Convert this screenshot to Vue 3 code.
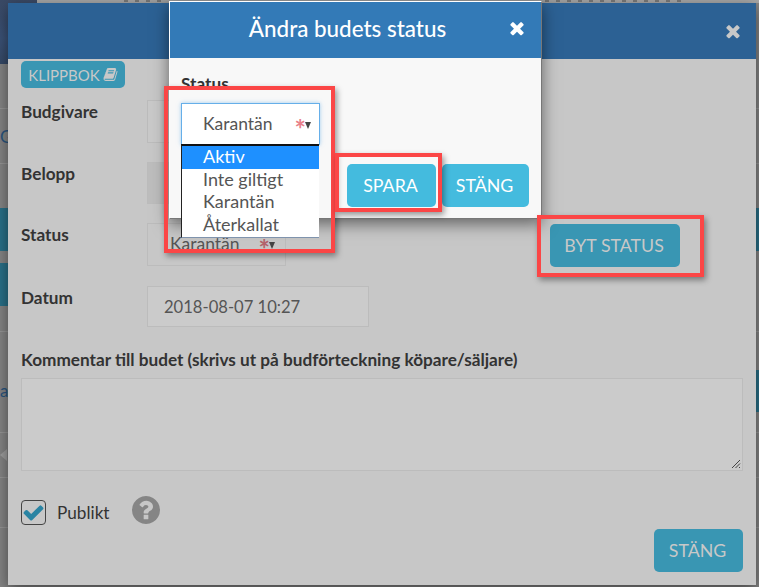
<template>
  <div class="page">
    <!-- page behind the dialogs, only the edges show -->
    <div class="backdrop">
      <div class="photo"></div>
      <div class="top-band"></div>
      <div class="top-text t1"></div>
      <div class="top-text t2"></div>
      <div v-for="y in rowLines" :key="y" class="line" :style="{ top: y + 'px' }"></div>
      <div class="strip s1"></div>
      <div class="strip s2"></div>
      <div class="strip s3"></div>
      <span class="edge e1">G</span>
      <span class="edge e2">a</span>
      <span class="sort"></span>
    </div>

    <section class="dialog big">
      <header class="big-head">
        <button class="close dim" type="button" aria-label="Stäng">
          <svg viewBox="0 0 1792 1792" width="20" height="20"><path :d="timesPath" /></svg>
        </button>
      </header>
      <div class="big-body">
        <button class="btn klipp" type="button">
          KLIPPBOK
          <svg viewBox="0 0 1792 1792" width="15" height="15"><path :d="bookPath" /></svg>
        </button>

        <div class="row r-first">
          <label>Budgivare</label>
          <div class="field wide"></div>
        </div>
        <div class="row r-amount">
          <label>Belopp</label>
          <div class="field wide filled"></div>
        </div>
        <div class="row">
          <label>Status</label>
          <div class="field select">
            <span class="val">Karantän</span>
            <span class="star">*</span><span class="arrow"></span>
          </div>
          <button class="btn byt" type="button">BYT STATUS</button>
        </div>
        <div class="row r-date">
          <label>Datum</label>
          <div class="field wide date">2018-08-07 10:27</div>
        </div>

        <label class="comment-label">Kommentar till budet (skrivs ut på budförteckning köpare/säljare)</label>
        <div class="comment">
          <svg class="grip" viewBox="0 0 10 10" width="10" height="10">
            <path d="M1 9 9 1M4.5 9 9 4.5M8 9 9 8" stroke="#444" stroke-width="1" fill="none" />
          </svg>
        </div>

        <div class="publikt">
          <span class="check">
            <svg viewBox="0 0 1792 1792" width="23" height="23"><path :d="checkPath" /></svg>
          </span>
          <span class="publikt-text">Publikt</span>
          <svg class="help" viewBox="128 128 1536 1536" width="28" height="28"><path :d="helpPath" /></svg>
        </div>

        <div class="big-foot">
          <button class="btn stang" type="button">STÄNG</button>
        </div>
      </div>
    </section>

    <section class="dialog small">
      <header class="small-head">
        <h2>Ändra budets status</h2>
        <button class="close" type="button" aria-label="Stäng">
          <svg viewBox="0 0 1792 1792" width="20" height="20"><path :d="timesPath" /></svg>
        </button>
      </header>
      <div class="small-body">
        <label class="status-label">Status</label>
        <div class="open-select">
          <div class="picker">
            <span class="val">Karantän</span>
            <span class="star">*</span><span class="arrow"></span>
          </div>
          <ul class="options">
            <li v-for="o in options" :key="o" :class="{ active: o === 'Aktiv' }">{{ o }}</li>
          </ul>
        </div>
        <div class="small-foot">
          <button class="btn light save" type="button">SPARA</button>
          <button class="btn light" type="button">STÄNG</button>
        </div>
      </div>
    </section>

    <div class="mark m1"></div>
    <div class="mark m2"></div>
    <div class="mark m3"></div>
  </div>
</template>

<script setup>
const options = ['Aktiv', 'Inte giltigt', 'Karantän', 'Återkallat']
const rowLines = [108, 163, 331, 432, 477, 527]

const timesPath = 'M1490 1322q0 40-28 68l-136 136q-28 28-68 28t-68-28l-294-294-294 294q-28 28-68 28t-68-28l-136-136q-28-28-28-68t28-68l294-294-294-294q-28-28-28-68t28-68l136-136q28-28 68-28t68 28l294 294 294-294q28-28 68-28t68 28l136 136q28 28 28 68t-28 68l-294 294 294 294q28 28 28 68z'
const checkPath = 'M1671 566q0 40-28 68l-724 724-136 136q-28 28-68 28t-68-28l-136-136-362-362q-28-28-28-68t28-68l136-136q28-28 68-28t68 28l294 295 656-657q28-28 68-28t68 28l136 136q28 28 28 68z'
const helpPath = 'M1024 1376v-192q0-14-9-23t-23-9h-192q-14 0-23 9t-9 23v192q0 14 9 23t23 9h192q14 0 23-9t9-23zm256-672q0-88-55.5-163t-138.5-116-170-41q-243 0-371 213-15 24 8 42l132 100q7 6 19 6 16 0 25-12 53-68 86-92 34-24 86-24 48 0 85.5 26t37.5 59q0 38-20 61t-68 45q-63 28-115.5 86.5t-52.5 125.5v36q0 14 9 23t23 9h192q14 0 23-9t9-23q0-19 21.5-49.5t54.5-49.5q32-18 49-28.5t46-35 44.5-48 28-60.5 12.5-81zm384 192q0 209-103 385.5t-279.5 279.5-385.5 103-385.5-103-279.5-279.5-103-385.5 103-385.5 279.5-279.5 385.5-103 385.5 103 279.5 279.5 103 385.5z'
const bookPath = 'M1703 478q40 57 18 129l-275 906q-19 64-76.5 107.5t-122.5 43.5h-923q-77 0-148.5-53.5t-99.5-131.5q-24-67-2-127 0-4 3-27t4-37q1-8-3-21.5t-3-19.5q2-11 8-21t16.5-23.5 16.5-23.5q23-38 45-91.5t30-91.5q3-10 .5-30t-.5-28q3-11 17-28t17-23q21-36 42-92t25-90q1-9-2.5-32t.5-28q4-13 22-30.5t22-22.5q19-26 42.5-84.5t27.5-96.5q1-8-3-25.5t-2-26.5q2-8 9-18t18-23 17-21q8-12 16.5-30.5t15-35 16-36 19.5-32 26.5-23.5 36-11.5 47.5 5.5l-1 3q38-9 51-9h761q74 0 114 56t18 130l-274 906q-36 119-71.5 153.5t-128.5 34.5h-869q-27 0-38 15-11 16-1 43 24 70 144 70h923q29 0 56-15.5t35-41.5l300-987q7-22 5-57 38 15 59 43zm-1064 2q-4 13 2 22.5t20 9.5h608q13 0 25.5-9.5t16.5-22.5l21-64q4-13-2-22.5t-20-9.5h-608q-13 0-25.5 9.5t-16.5 22.5zm-83 256q-4 13 2 22.5t20 9.5h608q13 0 25.5-9.5t16.5-22.5l21-64q4-13-2-22.5t-20-9.5h-608q-13 0-25.5 9.5t-16.5 22.5z'
</script>

<style>
html,
body {
  margin: 0;
  overflow: hidden;
}
</style>

<style scoped>
.page {
  position: relative;
  width: 759px;
  height: 587px;
  overflow: hidden;
  font-family: Lato, "Noto Sans", sans-serif;
  font-size: 17.2px;
  color: #333;
}

.backdrop {
  position: absolute;
  inset: 0;
  background: #868686;
}

.photo {
  position: absolute;
  left: 0;
  top: 0;
  width: 37px;
  height: 64px;
  background: linear-gradient(#3a4a66, #3c5378 60%, #364a68);
}

.top-band {
  position: absolute;
  left: 37px;
  right: 0;
  top: 0;
  height: 3px;
  background: #a8a8a8;
}

.top-text {
  position: absolute;
  top: 0;
  height: 2px;
  background: repeating-linear-gradient(90deg, #7a7a7a 0 4px, transparent 4px 11px);
}

.t1 { left: 124px; width: 44px; }
.t2 { left: 545px; width: 140px; }

.line {
  position: absolute;
  left: 0;
  right: 0;
  height: 1px;
  background: #979797;
}

.strip {
  position: absolute;
  width: 759px;
  left: 0;
  height: 43px;
  background: #2a7189;
}

.s1 { top: 208px; }
.s2 { top: 263px; width: 100px; }
.s3 { top: 370px; left: 700px; width: 59px; height: 42px; }

.edge {
  position: absolute;
  left: 0;
  color: #2a5580;
  font-size: 17px;
  line-height: 20px;
}

.e1 { top: 127px; }
.e2 { top: 381px; }

.sort {
  position: absolute;
  left: 0;
  top: 449px;
  width: 7px;
  height: 12px;
  background: #a0a0a0;
  clip-path: polygon(100% 0, 100% 100%, 0 50%);
}

.dialog {
  position: absolute;
  box-sizing: border-box;
  box-shadow: 0 5px 15px rgba(0, 0, 0, 0.5);
}

.big {
  left: 8px;
  top: 3px;
  width: 748px;
  height: 582px;
  background: #c7c7c7;
}

.big-head {
  height: 56px;
  background: #2c6194;
  display: flex;
  align-items: center;
  justify-content: flex-end;
  padding-right: 13px;
}

.close {
  border: 0;
  padding: 0;
  background: none;
  display: flex;
  fill: #fff;
}

.close.dim {
  fill: #c8c8c8;
}

.big-body {
  padding: 2px 13px 0;
}

.btn {
  box-sizing: border-box;
  font-family: inherit;
  font-size: 17.8px;
  border: 0;
  border-radius: 5px;
  background: #3996b3;
  color: #c8c8c8;
  height: 43px;
  padding: 0 2px 2px 0;
  text-align: center;
}

.klipp {
  height: 27px;
  width: 104px;
  padding: 0;
  font-size: 15px;
  display: flex;
  align-items: center;
  justify-content: center;
  gap: 3px;
  fill: #c8c8c8;
}

.row {
  display: flex;
  height: 43px;
  margin-top: 19px;
}

.r-first { margin-top: 12px; }
.r-amount { height: 42px; }
.r-date { margin-top: 20px; height: 41px; }

.row label {
  width: 126px;
  flex: none;
  font-weight: 700;
  line-height: 24px;
}

.field {
  box-sizing: border-box;
  border: 1px solid #bcbcbc;
  background: #c9c9c9;
  position: relative;
}

.wide { width: 222px; }
.filled { background: #bdbdbd; }

.date {
  background: #cbcbcb;
  padding-left: 16px;
  line-height: 40px;
  font-size: 16.6px;
  color: #555;
}

.select {
  width: 139px;
  background: transparent;
  display: flex;
  align-items: center;
  padding: 0 10px 2px 22px;
  color: #555;
}

.val {
  font-size: 17.5px;
  flex: 1;
}

.star {
  color: #e8808a;
  font-size: 27px;
  font-weight: 700;
  line-height: 27px;
  height: 17px;
  margin-right: -1px;
}

.select .star { color: #b4636c; }

.arrow {
  width: 0;
  height: 0;
  margin-top: 4px;
  border-left: 3.5px solid transparent;
  border-right: 3.5px solid transparent;
  border-top: 7px solid #444;
}

.byt {
  width: 130px;
  margin-left: 264px;
  margin-top: 1px;
}

.comment-label {
  display: block;
  font-weight: 700;
  margin-top: 21px;
  line-height: 24px;
}

.comment {
  box-sizing: border-box;
  margin-top: 6px;
  height: 93px;
  border: 1px solid #bcbcbc;
  background: #cbcbcb;
  position: relative;
}

.grip {
  position: absolute;
  right: 1px;
  bottom: 1px;
}

.publikt {
  display: flex;
  align-items: center;
  margin-top: 26px;
  height: 30px;
}

.check {
  box-sizing: border-box;
  width: 25px;
  height: 25px;
  border: 1px solid #444;
  border-radius: 4px;
  display: flex;
  align-items: center;
  justify-content: center;
  fill: #2a84a3;
}

.publikt-text {
  margin-left: 11px;
  color: #333;
}

.help {
  margin-left: 22px;
  margin-top: -5px;
  fill: #858585;
}

.big-foot {
  display: flex;
  justify-content: flex-end;
  margin-top: 2px;
}

.stang { width: 89px; }

.small {
  left: 169px;
  top: 1px;
  width: 373px;
  height: 218px;
  background: #f8f8f8;
  border: 1px solid #fff;
  border-right-color: #777;
  border-bottom-color: #777;
}

.small-head {
  box-sizing: border-box;
  height: 56px;
  background: #337ab7;
  display: flex;
  align-items: center;
  justify-content: center;
  position: relative;
  padding: 0 16px 3px 0;
  color: #fff;
}

.small-head h2 {
  margin: 0;
  font-size: 22.4px;
  font-weight: 500;
}

.small-head .close {
  position: absolute;
  right: 14px;
  top: 16px;
}

.small-body {
  padding: 14px 12px 0 11px;
}

.status-label {
  display: block;
  font-weight: 700;
  line-height: 24px;
}

.open-select {
  position: relative;
  margin-top: 7px;
  width: 139px;
}

.picker {
  box-sizing: border-box;
  height: 42px;
  background: #fff;
  border: 1px solid #66afe9;
  box-shadow: 0 0 4px rgba(102, 175, 233, 0.6);
  display: flex;
  align-items: center;
  padding: 0 8px 2px 21px;
  color: #555;
}

.options {
  position: absolute;
  left: 0;
  top: 41px;
  width: 138px;
  box-sizing: border-box;
  margin: 0;
  padding: 0 0 1px;
  list-style: none;
  background: #fff;
  border-top: 2px solid #111;
  border-left: 1px solid #222;
  border-bottom: 1px solid #7f93ad;
  color: #555;
  font-size: 18px;
  z-index: 2;
}

.options li {
  height: 22.5px;
  line-height: 20.5px;
  padding-left: 21px;
}

.options li.active {
  background: #1e90ff;
  color: #fff;
}

.small-foot {
  display: flex;
  justify-content: flex-end;
  gap: 6px;
  margin-top: 19px;
}

.light {
  width: 87px;
  background: #44bbde;
  color: #fff;
}

.save { width: 89px; }

.mark {
  position: absolute;
  box-sizing: border-box;
  border: 4px solid #fb4646;
  box-shadow: 2px 3px 6px rgba(0, 0, 0, 0.4);
}

.m1 { left: 164px; top: 86px; width: 171px; height: 167px; }
.m2 { left: 335px; top: 153px; width: 107px; height: 59px; }
.m3 { left: 537px; top: 215px; width: 167px; height: 62px; }
</style>
